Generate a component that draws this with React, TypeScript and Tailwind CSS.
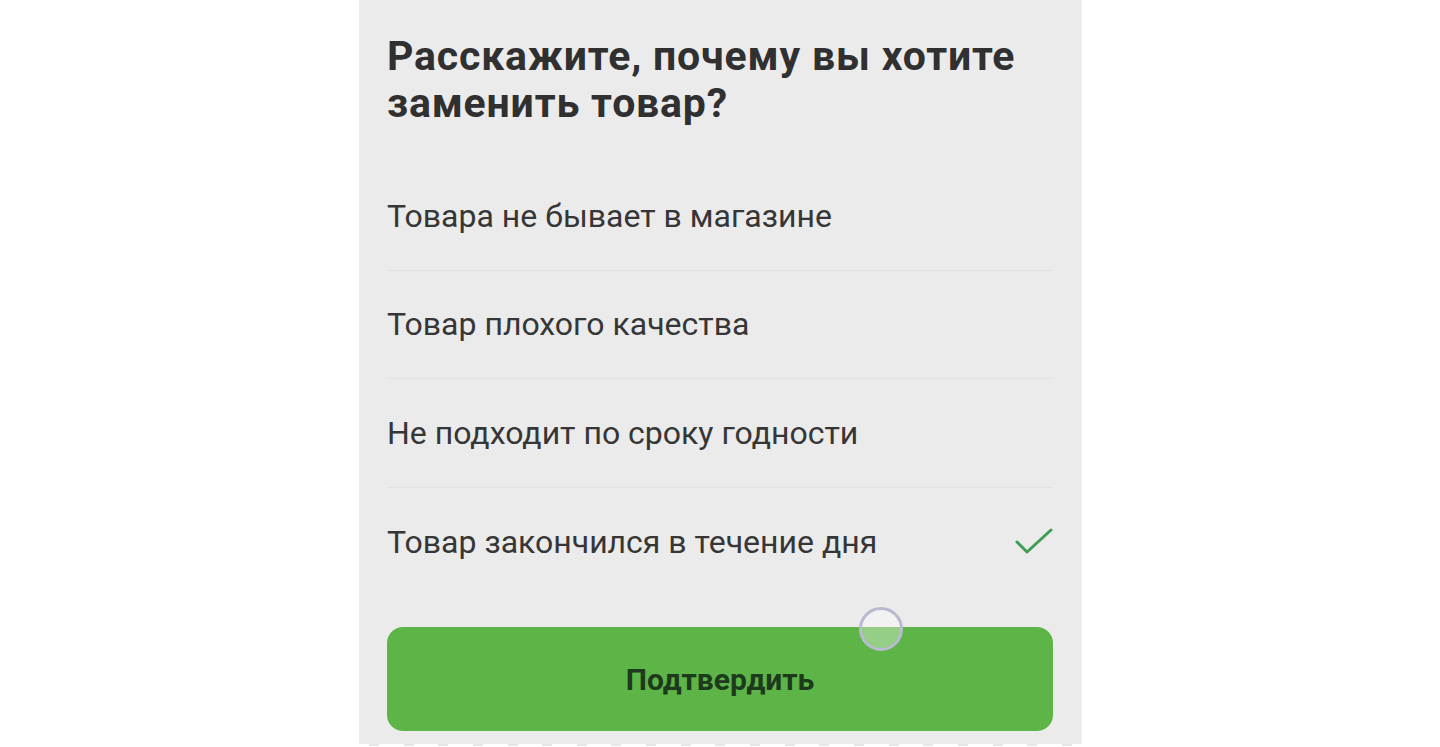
import React from "react";

const reasons = [
  "Товара не бывает в магазине",
  "Товар плохого качества",
  "Не подходит по сроку годности",
  "Товар закончился в течение дня",
];

function CheckIcon() {
  return (
    <svg width="38" height="28" viewBox="0 0 38 28" fill="none" aria-hidden>
      <path
        d="M2 14 L12 24 L36 2"
        stroke="#3f9d56"
        strokeWidth="3"
        strokeLinecap="round"
        strokeLinejoin="round"
      />
    </svg>
  );
}

export default function App() {
  const selected = 3;
  return (
    <div className="min-h-[747px] w-full bg-white font-['Roboto',sans-serif]">
      <div className="ml-[359px] flex h-[744px] w-[723px] flex-col bg-[#ebebeb] pl-[28px] pr-[29px]">
        {/* заголовок */}
        <h1 className="h-[162px] pt-[33px] text-[41px] leading-[47px] font-bold tracking-[0.02em] text-[#303030]">
          Расскажите, почему вы хотите
          <br />
          заменить товар?
        </h1>

        <div className="flex flex-col">
          {reasons.map((r, i) => (
            <div
              key={r}
              className={
                "flex h-[108.5px] items-center justify-between " +
                (i < reasons.length - 1 ? "border-b border-[#e2e2e2]" : "")
              }
            >
              <span className="text-[32px] leading-none text-[#363636]">{r}</span>
              {i === selected && <CheckIcon />}
            </div>
          ))}
        </div>

        <div className="relative mt-[31px]">
          <button className="flex h-[104px] w-full items-center justify-center rounded-[16px] bg-[#5db447] text-[30px] font-bold text-[#1e3a1c]">
            Подтвердить
          </button>
          {/* след касания */}
          <span className="pointer-events-none absolute left-[472px] top-[-20px] h-[44px] w-[44px] rounded-full border-[3px] border-[#b9b9cf] bg-white/35" />
        </div>
      </div>
      <div className="ml-[359px] flex w-[723px] justify-between px-[10px]">
        {Array.from({ length: 21 }).map((_, i) => (
          <span key={i} className="h-[2px] w-[10px] bg-[#e6e6e6]" />
        ))}
      </div>
    </div>
  );
}
